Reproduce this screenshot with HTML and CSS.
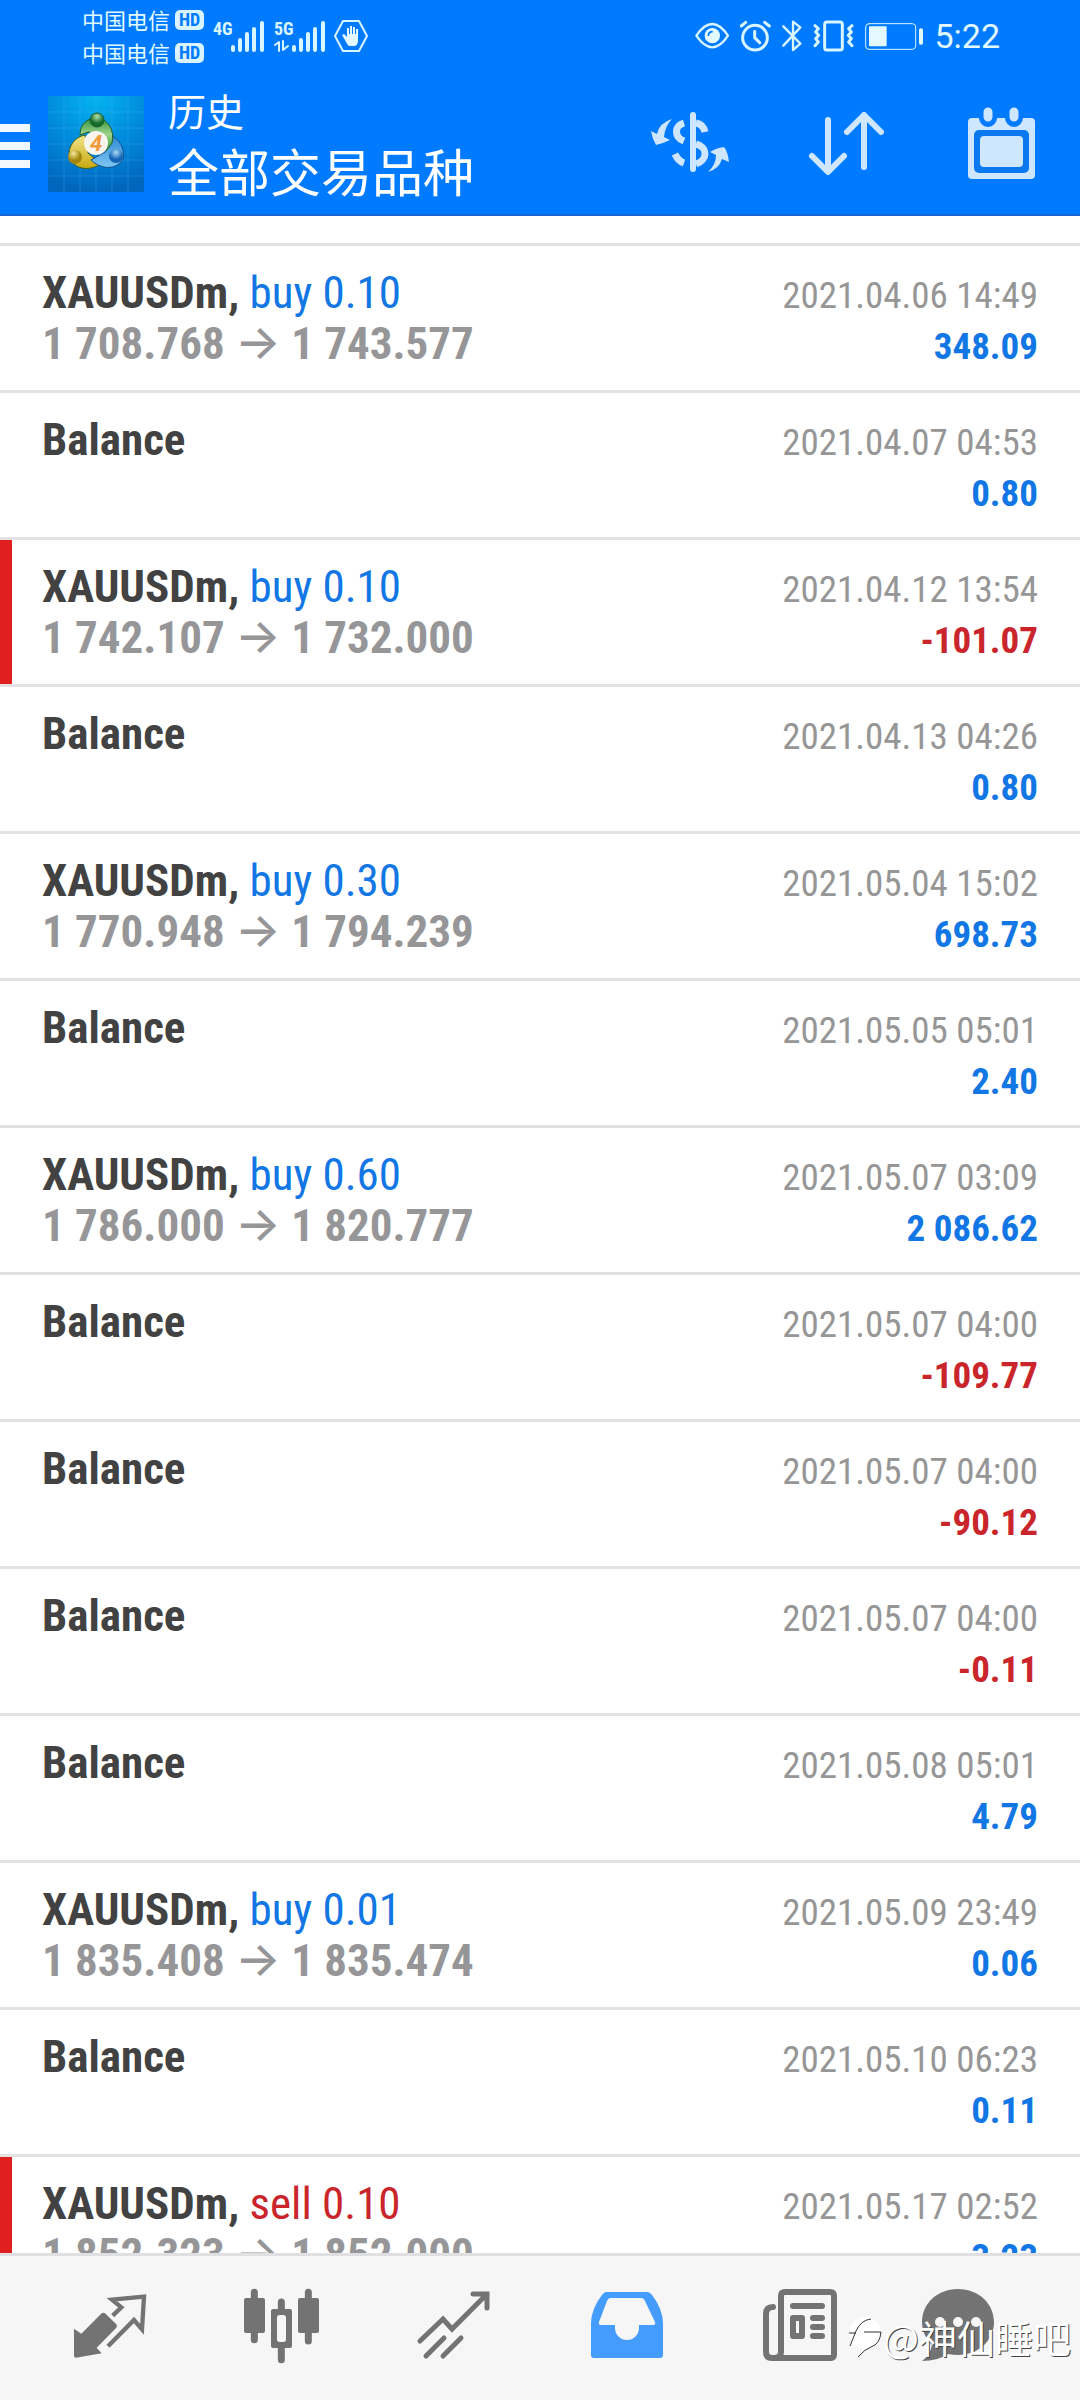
FILE: index.html
```html
<!DOCTYPE html>
<html lang="zh-CN">
<head>
<meta charset="utf-8">
<meta name="viewport" content="width=device-width, initial-scale=1">
<title>历史</title>
<link rel="stylesheet" href="styles.css">
</head>
<body>
<div class="app">
  <header class="header">
    <div class="status">
      <div class="carriers">
        <div class="carrier">中国电信<span class="hd">HD</span></div>
        <div class="carrier">中国电信<span class="hd">HD</span></div>
      </div>
      <svg class="signal-4g" width="52" height="40" viewBox="0 -4 52 40">
        <text class="net" x="0" y="15">4G</text>
        <path class="bars" d="M20 27v3M27 20v10M34 14v16M41 9v21M49 3v27"/>
      </svg>
      <svg class="signal-5g" width="52" height="40" viewBox="0 -4 52 40">
        <text class="net" x="0" y="15">5G</text>
        <path class="thin" d="M1 25l4-3v9M9 21v9l5-4"/>
        <path class="bars" d="M20 27v3M27 20v10M34 14v16M41 9v21M49 3v27"/>
      </svg>
      <svg class="guard" width="34" height="32" viewBox="0 0 34 32">
        <path class="thin" d="M9 1h16l8 15-8 15H9L1 16z"/>
        <path class="solid" d="M11 20l-3-5 2-1 3 3V8h2v6h1V6h2v8h1V7h2v7h1V9h2v12c0 3-2 5-4 5h-4c-2 0-3-2-5-6z"/>
      </svg>
      <div class="status-right">
        <svg width="34" height="32" viewBox="166 30 102 96">
          <path class="s7" d="M170 77Q218 7 265 77Q218 147 170 77z"/>
          <circle class="solid" cx="218" cy="77" r="23"/>
          <path class="cut" d="M206 78q0-13 13-13"/>
        </svg>
        <svg width="31" height="32" viewBox="303 30 93 96">
          <circle class="s9" cx="348" cy="83" r="37"/>
          <path class="s9" d="M347 64v19l15 15M307 48l13-11M377 37l14 11"/>
        </svg>
        <svg width="20" height="32" viewBox="428 30 60 96">
          <path class="s7" d="M432 49l51 52-22 19V35l22 17-51 55"/>
        </svg>
        <svg width="41" height="32" viewBox="520 30 121 96">
          <rect class="s9" x="554" y="36" width="53" height="84" rx="7"/>
          <path class="s9" d="M525 47l10 9-8 10 9 10-9 10 8 10-10 11M636 47l-10 9 8 10-9 10 9 10-8 10 10 11"/>
        </svg>
        <svg class="battery" width="58" height="32" viewBox="684 30 174 96">
          <rect class="s4" x="686" y="41" width="150" height="77" rx="10"/>
          <rect class="solid" x="696" y="49" width="53" height="60" rx="3"/>
          <rect class="solid" x="846" y="55" width="12" height="49" rx="5"/>
        </svg>
        <time class="clock">5:22</time>
      </div>
    </div>
    <div class="toolbar">
      <button class="menu" type="button" aria-label="菜单">
        <svg width="30" height="44" viewBox="0 0 30 44"><path d="M0 0h30v8H0zM0 18h30v8H0zM0 36h30v8H0z"/></svg>
      </button>
      <svg class="logo" width="96" height="96" viewBox="0 0 96 96">
        <defs>
          <radialGradient id="sky" cx=".5" cy="0" r="1"><stop offset="0" stop-color="#05b4f2"/><stop offset=".55" stop-color="#0088da"/><stop offset="1" stop-color="#0065bd"/></radialGradient>
          <linearGradient id="green" x2="0" y2="1"><stop offset="0" stop-color="#2f8f3c"/><stop offset=".5" stop-color="#9fd58c"/><stop offset="1" stop-color="#2c9438"/></linearGradient>
          <linearGradient id="gold" x2="0" y2="1"><stop offset="0" stop-color="#f1e58a"/><stop offset="1" stop-color="#c9a80f"/></linearGradient>
          <linearGradient id="azure" x2="0" y2="1"><stop offset="0" stop-color="#2b86cf"/><stop offset="1" stop-color="#7cc6f4"/></linearGradient>
          <radialGradient id="ballgreen" cx=".5" cy=".25"><stop offset="0" stop-color="#b6e2a8"/><stop offset="1" stop-color="#156b28"/></radialGradient>
          <radialGradient id="ballgold" cx=".4" cy=".25"><stop offset="0" stop-color="#f5ea9a"/><stop offset="1" stop-color="#a1860b"/></radialGradient>
          <radialGradient id="ballblue" cx=".5" cy=".25"><stop offset="0" stop-color="#a9dcfb"/><stop offset="1" stop-color="#1564b4"/></radialGradient>
        </defs>
        <path fill="url(#sky)" d="M0 0h96v96H0z"/>
        <path class="grid" d="M16 0v96M32 0v96M48 0v96M64 0v96M80 0v96M0 16h96M0 32h96M0 48h96M0 64h96M0 80h96"/>
        <path fill="url(#gold)" stroke="#41631e" d="M37 39C26 41 20 51 21 61C26 73 40 76 53 68L40 57z"/>
        <path fill="url(#azure)" stroke="#124f8d" d="M60 38C72 42 77 53 75 63C68 75 52 73 43 64L57 56z"/>
        <path fill="url(#green)" stroke="#1b602c" d="M32 39C32 28 39 22 49 22C60 23 67 34 64 47L58 55L53 38L40 36z"/>
        <circle fill="url(#ballgreen)" stroke="#1b602c" cx="49" cy="24" r="7"/>
        <circle fill="url(#ballgold)" cx="27" cy="61" r="7"/>
        <circle fill="url(#ballblue)" cx="68" cy="60" r="7"/>
        <circle class="disc" cx="48" cy="47" r="12"/>
        <text class="four" x="48" y="55">4</text>
      </svg>
      <div class="titles">
        <div class="title">历史</div>
        <h1 class="subtitle">全部交易品种</h1>
      </div>
      <div class="actions">
        <button type="button" aria-label="品种">
          <svg width="84" height="84" viewBox="0 0 84 84">
            <path class="ic" d="M24 17Q11 21 9 32L3 29Q4 36 8 43Q16 41 22 38L16 35Q17 24 24 17zM60 70Q71 67 74 57L81 60Q80 50 76 45Q68 46 62 50L68 53Q68 63 60 70z"/>
            <path class="ln" d="M45 13v54"/>
            <path class="lb" d="M36 21C26 24 26 35 36 39M27 52Q30 59 36 61M48 21Q55 22 57 30M48 42C60 45 60 58 48 62"/>
          </svg>
        </button>
        <button type="button" aria-label="排序">
          <svg width="84" height="84" viewBox="0 0 84 84"><path class="ln" d="M24 18v51M8 54l16 16 16-16M60 65V13M43 30l17-17 17 17"/></svg>
        </button>
        <button type="button" aria-label="日期">
          <svg width="84" height="84" viewBox="0 0 84 84">
            <rect class="ic" x="8" y="16" width="67" height="61" rx="4"/>
            <path class="notch" d="M28 9v7M54 9v7"/>
            <path class="tab" d="M28 10v5M54 10v5"/>
            <rect class="hole" x="14" y="28" width="55" height="43" rx="5"/>
            <rect class="ic" x="20" y="34" width="43" height="31" rx="4"/>
          </svg>
        </button>
      </div>
    </div>
  </header>

  <main class="history">
    <ul class="deals">
      <li class="deal"><div class="main"><div><b>XAUUSDm,</b> <span class="buy">buy 0.10</span></div><div class="prices">1 708.768 <span class="to">→</span> 1 743.577</div></div><div class="side"><time>2021.04.06 14:49</time><div class="gain">348.09</div></div></li>
      <li class="deal"><div class="main"><b>Balance</b></div><div class="side"><time>2021.04.07 04:53</time><div class="gain">0.80</div></div></li>
      <li class="deal stopped"><div class="main"><div><b>XAUUSDm,</b> <span class="buy">buy 0.10</span></div><div class="prices">1 742.107 <span class="to">→</span> 1 732.000</div></div><div class="side"><time>2021.04.12 13:54</time><div class="loss">-101.07</div></div></li>
      <li class="deal"><div class="main"><b>Balance</b></div><div class="side"><time>2021.04.13 04:26</time><div class="gain">0.80</div></div></li>
      <li class="deal"><div class="main"><div><b>XAUUSDm,</b> <span class="buy">buy 0.30</span></div><div class="prices">1 770.948 <span class="to">→</span> 1 794.239</div></div><div class="side"><time>2021.05.04 15:02</time><div class="gain">698.73</div></div></li>
      <li class="deal"><div class="main"><b>Balance</b></div><div class="side"><time>2021.05.05 05:01</time><div class="gain">2.40</div></div></li>
      <li class="deal"><div class="main"><div><b>XAUUSDm,</b> <span class="buy">buy 0.60</span></div><div class="prices">1 786.000 <span class="to">→</span> 1 820.777</div></div><div class="side"><time>2021.05.07 03:09</time><div class="gain">2 086.62</div></div></li>
      <li class="deal"><div class="main"><b>Balance</b></div><div class="side"><time>2021.05.07 04:00</time><div class="loss">-109.77</div></div></li>
      <li class="deal"><div class="main"><b>Balance</b></div><div class="side"><time>2021.05.07 04:00</time><div class="loss">-90.12</div></div></li>
      <li class="deal"><div class="main"><b>Balance</b></div><div class="side"><time>2021.05.07 04:00</time><div class="loss">-0.11</div></div></li>
      <li class="deal"><div class="main"><b>Balance</b></div><div class="side"><time>2021.05.08 05:01</time><div class="gain">4.79</div></div></li>
      <li class="deal"><div class="main"><div><b>XAUUSDm,</b> <span class="buy">buy 0.01</span></div><div class="prices">1 835.408 <span class="to">→</span> 1 835.474</div></div><div class="side"><time>2021.05.09 23:49</time><div class="gain">0.06</div></div></li>
      <li class="deal"><div class="main"><b>Balance</b></div><div class="side"><time>2021.05.10 06:23</time><div class="gain">0.11</div></div></li>
      <li class="deal stopped"><div class="main"><div><b>XAUUSDm,</b> <span class="sell">sell 0.10</span></div><div class="prices">1 852.323 <span class="to">→</span> 1 852.000</div></div><div class="side"><time>2021.05.17 02:52</time><div class="gain">3.23</div></div></li>
    </ul>
  </main>

  <nav class="tabs">
    <a href="#quotes" aria-label="行情">
      <svg width="96" height="96" viewBox="6 30 288 288">
        <path d="M42 176L64 191L125 130Q130 126 135 130L169 163Q173 168 169 173L110 233L125 250L48 263Q42 263 42 258z"/>
        <path class="o9" d="M144 229L222 150L246 178L252 80L156 89L184 112L158 137"/>
      </svg>
    </a>
    <a href="#charts" aria-label="图表">
      <svg width="96" height="96" viewBox="522 30 288 288">
        <path class="wick" d="M583 67v142M745 67v146M664 96v30M664 228v41"/>
        <rect x="552" y="84" width="63" height="105" rx="6"/>
        <rect x="714" y="84" width="63" height="105" rx="6"/>
        <rect x="633" y="117" width="63" height="117" rx="6"/>
        <rect class="void" x="651" y="135" width="27" height="81" rx="8"/>
      </svg>
    </a>
    <a href="#trade" aria-label="交易">
      <svg width="96" height="96" viewBox="0 0 96 96"><path class="o5" d="M14 61L37 39L46 49L80 15M67 14H81V28M20 76L38 58M37 76L55 58"/></svg>
    </a>
    <a class="current" href="#history" aria-label="历史" aria-current="page">
      <svg width="96" height="96" viewBox="0 0 96 96">
        <path d="M28 12H69Q72 12 74 15Q85 29 85 44V75Q85 78 82 78H16Q13 78 13 75V44Q13 29 24 15Q26 12 28 12z"/>
        <path class="void" d="M33 18H63Q66 18 67 21L77 42Q78 45 75 45H61V48A12 12 0 0 1 37 48V45H23Q20 45 21 42L29 21Q30 18 33 18z"/>
      </svg>
    </a>
    <a href="#news" aria-label="新闻">
      <svg width="96" height="96" viewBox="-2 0 96 96">
        <path class="o6" d="M21 27Q14 27 14 34V72Q14 78 20 78H79Q82 78 82 74V16Q82 12 78 12H33Q29 12 29 16V72Q29 78 22 78"/>
        <path class="o6" d="M41 26H70M61 38H70M61 47H70M61 56H70"/>
        <rect x="38" y="35" width="15" height="24" rx="3"/>
        <rect class="void" x="44" y="41" width="3" height="12"/>
      </svg>
    </a>
    <a href="#messages" aria-label="消息">
      <svg width="96" height="96" viewBox="0 0 96 96">
        <path d="M36 9C57 9 72 24 72 42C72 61 56 75 36 75Q31 75 26 74Q16 81 0 81Q8 75 10 65C4 59 0 51 0 42C0 24 15 9 36 9z"/>
        <path class="dots" d="M18 42h0M36 42h0M54 42h0"/>
      </svg>
    </a>
  </nav>

  <div class="watermark">
    <svg width="36" height="44" viewBox="0 0 36 44">
      <circle class="ball" cx="18" cy="18" r="16"/>
      <path class="edge" d="M3 31L9 16Q14 5 24 4M2 18H9M17 17H34Q33 29 24 32Q18 34 11 42"/>
    </svg>
    <span>@神仙睡吧</span>
  </div>
</div>
</body>
</html>
```
FILE: styles.css
```css
* { box-sizing: border-box; }

body {
  margin: 0;
  background: #fff;
  color: #424242;
  font-family: "Roboto Condensed", Roboto, "Noto Sans CJK SC", sans-serif;
}

.app {
  position: relative;
  display: flex;
  flex-direction: column;
  height: 100vh;
  overflow: hidden;
}

svg { display: block; flex: none; }
button { padding: 0; border: 0; background: none; }

/* header */
.header {
  flex: none;
  background: #007aff;
  box-shadow: inset 0 -2px #1464d2;
  color: #fff;
}

.status {
  display: flex;
  align-items: center;
  height: 72px;
  padding: 0 80px 0 82px;
  color: #e2faff;
}

.carrier {
  display: flex;
  align-items: center;
  gap: 5px;
  font: 22px/33px "Noto Sans CJK SC", sans-serif;
}

.hd {
  width: 29px;
  border-radius: 5px;
  background: #d8f4ff;
  color: #007aff;
  font: 700 18px/20px "Roboto Condensed", sans-serif;
  text-align: center;
}

.signal-4g { margin-left: 9px; }
.signal-5g { margin-left: 9px; }
.guard { margin-left: 8px; }
.net { font: 700 18px "Roboto Condensed", sans-serif; fill: #d8f6ff; }
.solid { fill: #e2faff; }
.bars, .thin, .s4, .s7, .s9 { fill: none; stroke: #d8f6ff; stroke-linecap: round; stroke-linejoin: round; }
.bars { stroke-width: 4; }
.thin { stroke-width: 2; }
.s4 { stroke-width: 3; }
.s7 { stroke-width: 7; }
.s9 { stroke-width: 9; }
.cut { fill: none; stroke: #007aff; stroke-width: 5; }

.status-right {
  display: flex;
  align-items: center;
  gap: 11px;
  margin-left: auto;
}
.clock { font: 34px/40px Roboto, sans-serif; }

.toolbar {
  display: flex;
  align-items: center;
  height: 144px;
  padding-right: 36px;
}
.menu { padding-top: 4px; }
.menu svg { fill: #f2f9ff; }
.logo { margin: 0 24px 0 18px; }
.grid { stroke: #4fc0f5; stroke-opacity: .25; }
.disc { fill: #f8f4ee; }
.four { font: italic 700 22px Roboto, sans-serif; fill: #f09a3e; text-anchor: middle; }

.titles { padding-bottom: 3px; font-family: "Noto Sans CJK SC", sans-serif; }
.title { font-size: 38px; line-height: 54px; }
.subtitle { margin: 0; font-size: 51px; font-weight: 400; line-height: 66px; }

.actions { display: flex; gap: 72px; margin-left: auto; }
.ic { fill: #cfe6ff; }
.ln, .lb, .tab, .notch { fill: none; stroke: #cfe6ff; stroke-linecap: round; stroke-linejoin: round; }
.ln { stroke-width: 6; }
.lb { stroke-width: 7; stroke-linecap: butt; }
.tab { stroke-width: 9; }
.notch { stroke: #007aff; stroke-width: 18; }
.hole { fill: #0a78f0; }

/* deals */
.history { flex: 1; min-height: 0; overflow: hidden; }

.deals {
  margin: 27px 0 0;
  padding: 0;
  border-top: 3px solid #e2e2e2;
  list-style: none;
}

.deal {
  display: flex;
  justify-content: space-between;
  padding: 21px 42px 18px;
  border-bottom: 3px solid #e2e2e2;
  line-height: 51px;
}
.stopped { box-shadow: inset 12px 0 #e01f1f; }

.main { font-size: 45px; }
.prices { color: #969698; font-weight: 700; }
.to { font-family: Inter, sans-serif; font-size: 48px; font-weight: 500; line-height: 1px; }
.side { padding-top: 3px; font-size: 37px; text-align: right; }
.side time { color: #969696; }
.gain, .loss { font-weight: 700; }
.buy, .gain { color: #1277e4; }
.sell, .loss { color: #c9252b; }

/* bottom tabs */
.tabs {
  display: flex;
  flex: none;
  align-items: center;
  height: 147px;
  padding: 0 24px;
  border-top: 3px solid #e0e0e2;
  background: #f6f6f6;
}
.tabs a { display: flex; flex: 1; justify-content: center; color: #737373; }
.tabs .current { color: #449cff; }
.tabs svg { fill: currentColor; }
.tabs .void { fill: #f6f6f6; }
.tabs .o9, .tabs .o5, .tabs .o6, .tabs .wick, .tabs .dots { fill: none; stroke: currentColor; }
.o9 { stroke-width: 13; }
.o5 { stroke-width: 5; stroke-linecap: round; }
.o6 { stroke-width: 6; stroke-linecap: round; }
.wick { stroke-width: 21; stroke-linecap: round; }
.tabs .dots { stroke: #f6f6f6; stroke-width: 10; stroke-linecap: round; }

.watermark {
  position: absolute;
  right: 9px;
  bottom: 39px;
  display: flex;
  align-items: center;
  color: #fff;
  font: 38px/48px "Noto Sans CJK SC", sans-serif;
  text-shadow: 1px 1px 0 #444;
}
.ball { fill: #fff; }
.edge { fill: none; stroke: #333; stroke-width: 1; }
```
